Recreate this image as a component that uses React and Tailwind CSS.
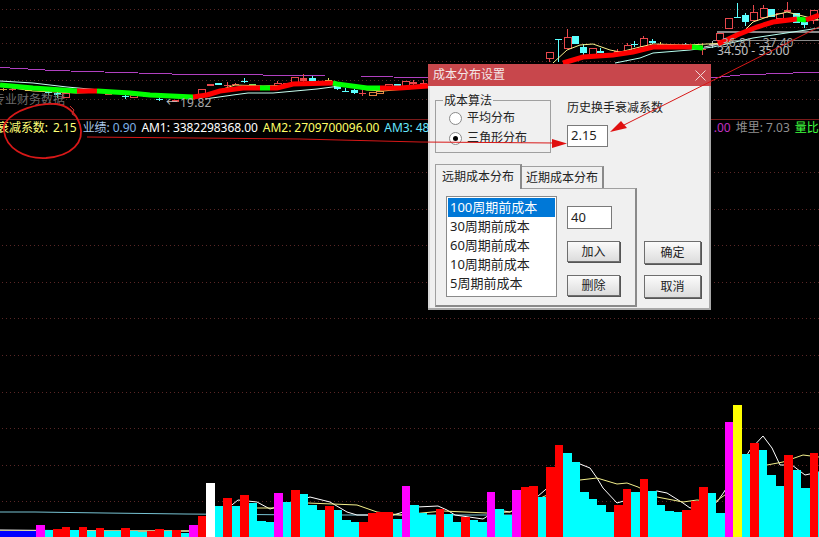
const DOT_ROWS = [9, 27, 43, 61, 80, 99, 172, 209, 245, 282, 318, 355, 392, 428, 465, 501];

const BAR_FILL = { m: '#ff00ff', c: '#00ffff', r: '#ff0000', w: '#ffffff', y: '#ffff00' };

// kind and top edge of each volume bar, left to right
const BARS = [
    ['m', 525], ['c', 530], ['r', 529], ['r', 527], ['c', 530], ['r', 527], ['c', 531], ['r', 528], ['c', 531], ['c', 531],
    ['r', 528], ['c', 531], ['c', 532], ['r', 531], ['r', 529], ['c', 531], ['r', 530], ['c', 533], ['m', 525], ['r', 516],
    ['w', 483], ['c', 506], ['r', 498], ['c', 506], ['r', 495], ['c', 503], ['c', 521], ['c', 522], ['m', 493], ['c', 502],
    ['r', 490], ['c', 494], ['c', 505], ['c', 510], ['r', 506], ['c', 510], ['c', 520], ['c', 522], ['r', 522], ['r', 513],
    ['r', 512], ['r', 512], ['c', 519], ['m', 486], ['c', 505], ['c', 513], ['c', 515], ['r', 509], ['c', 514], ['c', 522],
    ['r', 517], ['c', 520], ['c', 522], ['m', 492], ['c', 509], ['c', 515], ['m', 490], ['r', 487], ['r', 486], ['c', 497],
    ['r', 467], ['r', 445], ['c', 453], ['c', 462], ['c', 492], ['c', 499], ['c', 505], ['c', 512], ['r', 505], ['r', 489],
    ['c', 492], ['r', 479], ['c', 491], ['c', 505], ['c', 511], ['c', 512], ['r', 510], ['r', 501], ['r', 487], ['c', 493],
    ['c', 513], ['m', 422], ['y', 405], ['c', 454], ['r', 443], ['c', 450], ['c', 475], ['c', 486], ['r', 455], ['c', 470],
    ['c', 488], ['r', 453], ['c', 472],
];

// x, body top, body bottom, wick top, wick bottom, colour, hollow
const RED = '#e8484c';
const CYAN = '#5cffff';
const CANDLES = [
    [3, 89, 90, 88, 91, '#d0a040'], [12, 89, 90, 88, 91, RED], [28, 90, 91, 90, 91, '#e0c060'], [48, 92, 92, 89, 95, CYAN],
    [57, 93, 95, 92, 98, CYAN], [65, 93, 97, 93, 97, RED, true], [108, 93, 95, 93, 95, RED], [125, 96, 96, 94, 99, CYAN],
    [133, 95, 97, 95, 97, RED, true], [146, 96, 97, 96, 97, RED], [159, 99, 99, 97, 101, CYAN], [175, 100, 102, 100, 102, RED],
    [201, 89, 95, 89, 95, RED, true], [210, 84, 86, 84, 86, RED], [218, 83, 85, 83, 85, CYAN], [227, 85, 85, 82, 87, RED],
    [235, 84, 84, 83, 85, RED], [244, 81, 81, 78, 83, CYAN], [252, 84, 86, 84, 86, '#80e060'], [277, 83, 87, 81, 87, RED, true],
    [286, 83, 83, 83, 84, RED], [294, 77, 83, 77, 83, RED, true], [303, 78, 81, 74, 84, RED], [312, 78, 81, 76, 81, CYAN],
    [328, 80, 81, 78, 82, '#e0e060'], [337, 85, 89, 85, 90, CYAN], [345, 91, 91, 88, 92, CYAN], [354, 90, 93, 89, 94, CYAN],
    [362, 93, 93, 90, 96, RED], [372, 92, 95, 92, 95, '#e08040', true], [379, 91, 93, 91, 93, '#e08040', true],
    [388, 84, 87, 84, 87, RED, true], [397, 84, 87, 84, 87, CYAN], [405, 81, 86, 81, 86, RED, true], [413, 82, 84, 80, 85, RED],
    [423, 83, 84, 80, 85, RED],
    [549, 52, 58, 52, 62, RED, true], [558, 39, 39, 39, 62, CYAN], [567, 37, 48, 29, 48, RED, true], [575, 36, 44, 36, 44, CYAN],
    [583, 47, 53, 44, 56, CYAN], [592, 48, 54, 48, 54, RED, true], [600, 51, 53, 48, 53, CYAN], [617, 51, 53, 49, 55, RED],
    [627, 45, 51, 43, 51, RED, true], [634, 44, 44, 41, 47, CYAN], [643, 38, 46, 36, 46, RED, true], [652, 41, 43, 39, 44, CYAN],
    [660, 44, 45, 42, 46, '#e0e060'], [685, 44, 45, 43, 46, CYAN], [702, 49, 50, 43, 55, RED], [712, 44, 44, 41, 48, '#b0b0b0'],
    [719, 33, 40, 33, 40, RED, true], [728, 18, 28, 18, 28, RED, true], [737, 17, 17, 3, 18, CYAN], [745, 15, 22, 13, 26, CYAN],
    [753, 12, 20, 5, 20, RED, true], [763, 8, 17, 5, 17, RED, true], [771, 9, 17, 9, 17, CYAN], [779, 13, 18, 13, 18, RED, true],
    [787, 10, 12, 2, 12, RED], [796, 13, 23, 13, 23, CYAN], [804, 22, 25, 18, 28, CYAN], [813, 10, 20, 10, 24, RED, true],
];

const TREND = [
    ['#00ff00', '0,85 33,88 77,91'],
    ['#ff0000', '77,91 97,91'],
    ['#00ff00', '97,91 130,93 150,95 193,97'],
    ['#ff0000', '193,97 207,95 220,91 243,88 260,88'],
    ['#00ff00', '260,88 270,88'],
    ['#ff0000', '270,88 277,88 293,84 333,83'],
    ['#00ff00', '333,83 337,84 367,88 380,88'],
    ['#ff0000', '380,88 400,88 428,86'],
    ['#ff0000', '563,63 583,57 613,55 633,52 653,47 692,47'],
    ['#00ff00', '692,47 703,48'],
    ['#ff0000', '718,44 737,35 757,27 773,22 797,19'],
    ['#00ff00', '797,19 806,20'],
    ['#ff0000', '806,20 819,15'],
];

function PriceChart() {
    return (
        <svg className="absolute inset-0" width="819" height="537" viewBox="0 0 819 537">
            <g shapeRendering="crispEdges">
                {DOT_ROWS.map(y => (
                    <line key={y} x1="2" x2="819" y1={y + 0.5} y2={y + 0.5} stroke="#5a2626" strokeDasharray="1 3" />
                ))}
                <line x1="0" x2="819" y1="119.5" y2="119.5" stroke="#7a1a1a" />
                <polyline fill="none" stroke="#b040c0" points="0,67 10,68 28,69 45,70 70,71 104,72 138,73 172,74 200,74 325,76 360,76 393,77 430,78" />
                <polyline fill="none" stroke="#b040c0" points="711,78 740,75 819,72" />
                <rect x="717" y="31" width="102" height="2" fill="#8a8a8a" />
                <rect x="713" y="40" width="106" height="1" fill="#8a8a8a" />
            </g>
            {CANDLES.map(([x, top, bottom, wickTop, wickBottom, color, hollow]) => (
                <g key={x} shapeRendering="crispEdges">
                    <line x1={x + 0.5} x2={x + 0.5} y1={wickTop} y2={wickBottom} stroke={color} />
                    <rect x={x - 3} y={top} width="7" height={Math.max(bottom - top, 1)} fill={hollow ? '#000' : color} stroke={hollow ? color : 'none'} />
                </g>
            ))}
            <polyline fill="none" stroke="#c8fff0" points="0,81 33,83 67,87 100,90 133,93 167,95 193,97" />
            <polyline fill="none" stroke="#f0e060" points="0,86 33,91 77,93 100,92 193,99 220,90 235,85 263,86 300,85 333,82 367,90 383,91 428,87" />
            <polyline fill="none" stroke="#c8fff0" points="205,99 233,95 248,93 273,93 317,89 340,86" />
            <polyline fill="none" stroke="#f6f08c" points="553,63 567,50 580,45 593,44 610,50 620,52 640,47 653,44 687,45 727,43 740,35 753,22 767,17 787,12 807,17 819,20" />
            <polyline fill="none" stroke="#b8fff0" points="615,63 640,58 653,53 690,50 713,47 753,38 793,32 819,28" />
            <line x1="704" x2="720" y1="47" y2="44" stroke="#e0d0d0" />
            {TREND.map(([color, points]) => (
                <polyline key={points} fill="none" stroke={color} strokeWidth="5" points={points} />
            ))}
            <text x="-7" y="104" fontSize="12" fill="#6a6a6a">专业财务数据</text>
            <text x="166" y="107" fontSize="12" fill="#c0c0c0">←</text>
            <text x="180" y="107" fontSize="12" letterSpacing="0.2" fill="#a8a8a8">19.82</text>
            <text x="722" y="47" fontSize="12" fill="#a8a8a8">36.81 - 37.40</text>
            <text x="717" y="55" fontSize="12.2" fill="#c0c0c0">34.50 - 35.00</text>
        </svg>
    );
}

function VolumeChart() {
    return (
        <svg className="absolute inset-0" width="819" height="537" viewBox="0 0 819 537">
            <polyline fill="none" stroke="#78c4d4" points="0,512 35,512 105,513 185,514 312,515 600,515" />
            <polyline fill="none" stroke="#ffffff" points="0,530 108,531 200,531 238,500 257,502 270,509 310,497 330,502 347,512 357,515 393,515 400,513 417,507 438,506 447,510 455,515 483,519 497,510 510,512 537,497 545,490 580,464 590,468 597,478 603,488 617,503 657,491 667,493 683,503 690,508 717,502 724,492 750,450 763,436 772,448 780,465 792,465 805,475 819,472" />
            <polyline fill="none" stroke="#f4f08c" points="0,531 200,531 257,508 273,508 308,503 357,505 377,512 400,515 443,511 487,513 510,512 580,480 597,478 617,484 627,483 638,487 657,497 683,502 697,500 715,502 767,465 783,462 803,455 819,457" />
            <g shapeRendering="crispEdges">
                <rect x="0" y="531" width="36" height="6" fill="#0000ff" />
                {BARS.map(([kind, top], i) => {
                    const x = Math.round(36 + 8.5 * i);
                    return <rect key={i} x={x} y={top} width={Math.round(36 + 8.5 * (i + 1)) - x} height={537 - top} fill={BAR_FILL[kind]} />;
                })}
            </g>
        </svg>
    );
}

function IndicatorRow() {
    return (
        <div className="absolute inset-x-0 top-[120px] flex h-4 items-center justify-between whitespace-nowrap text-xs leading-4">
            <div className="-ml-[3px] flex shrink-0 gap-[5px] tracking-[-0.05px]">
                <span className="text-[#ffff78]">衰减系数: <span className="ml-[2px]">2.15</span></span>
                <span className="ml-px text-[#7fb2e8]"><span className="text-[#a8c8e8]">业绩:</span> 0.90</span>
                <span className="text-white">AM1: 3382298368.00</span>
                <span className="text-[#ffff66]">AM2: 2709700096.00</span>
                <span className="text-[#66e6ff]">AM3: 481</span>
            </div>
            <div className="-mr-[3px] flex shrink-0 gap-[5px]">
                <span className="text-[#c030c0]">.00</span>
                <span className="text-[#909090]">堆里: 7.03</span>
                <span className="text-[#40ff40]">量比:</span>
            </div>
        </div>
    );
}

function Radio({ checked, label, className }) {
    return (
        <div className={`flex h-4 items-center gap-[5px] ${className}`}>
            <span className="flex size-[13px] items-center justify-center rounded-full border border-[#8a8a8a] bg-white">
                {checked && <span className="size-[5px] rounded-full bg-black" />}
            </span>
            <span>{label}</span>
        </div>
    );
}

function Field({ value, className }) {
    return (
        <div className={`flex items-center border border-[#7a7a7a] bg-white pl-[3px] text-[13px] ${className}`}>
            {value}
        </div>
    );
}

function Button({ label, className }) {
    return (
        <div className={`flex items-center justify-center border border-[#6e6e6e] bg-gradient-to-b from-[#fbfbfb] to-[#dcdcdc] shadow-[1px_1px_0_#555] ${className}`}>
            {label}
        </div>
    );
}

const PERIODS = ['100周期前成本', '30周期前成本', '60周期前成本', '10周期前成本', '5周期前成本'];

function SettingsDialog() {
    return (
        <div className="absolute left-[428px] top-[64px] flex h-[246px] w-[283px] flex-col bg-[#f0f0f0] text-xs text-[#222] shadow-[inset_-2px_-2px_0_#a8a8a8,inset_2px_0_0_#d8d8d8]">
            <div className="flex h-[22px] items-center justify-between bg-[#c8474c] pl-[5px] pr-[5px] text-[#f4e8e8]">
                <span>成本分布设置</span>
                <svg width="11" height="11" viewBox="0 0 11 11" stroke="#f0d8d8" fill="none">
                    <path d="M0.5 0.5 10.5 10.5M10.5 0.5 0.5 10.5" />
                </svg>
            </div>

            <div className="flex pl-[7px] pt-[14px]">
                <div className="relative h-[53px] w-[116px] border border-[#a0a0a0] pl-[13px] pt-[9px]">
                    <span className="absolute -top-[8px] left-[7px] bg-[#f0f0f0] px-px leading-4">成本算法</span>
                    <Radio label="平均分布" />
                    <Radio checked label="三角形分布" className="mt-1" />
                </div>
                <div className="ml-[16px] flex flex-col">
                    <span className="leading-4">历史换手衰减系数</span>
                    <Field value="2.15" className="mt-[9px] h-[22px] w-[41px]" />
                </div>
            </div>

            <div className="flex pl-[7px] pt-[11px]">
                <div className="flex w-[202px] flex-col">
                    <div className="flex items-end">
                        <div className="z-10 -mb-px flex h-[25px] w-[87px] items-center justify-center border-r-2 border-t border-l border-[#a0a0a0] border-r-[#8a8a8a] bg-[#f0f0f0]">远期成本分布</div>
                        <div className="flex h-[22px] w-[82px] items-center justify-center border-r-2 border-t border-[#a0a0a0] border-r-[#8a8a8a] bg-[#f0f0f0]">近期成本分布</div>
                    </div>
                    <div className="flex h-[119px] border-b-2 border-l border-r-2 border-t border-[#a0a0a0] border-b-[#8a8a8a] border-r-[#8a8a8a] pl-[10px] pt-[7px]">
                        <div className="h-[101px] w-[111px] border border-[#8a8a8a] bg-white p-px text-[13px]">
                            {PERIODS.map((period, i) => (
                                <div key={period} className={`flex h-[19px] items-center pl-[2px] ${i === 0 ? 'bg-[#0078d7] text-white' : ''}`}>{period}</div>
                            ))}
                        </div>
                        <div className="ml-[10px] flex flex-col pt-[10px]">
                            <Field value="40" className="h-[23px] w-[45px]" />
                            <Button label="加入" className="mt-3 h-[21px] w-[53px]" />
                            <Button label="删除" className="mt-[13px] h-[21px] w-[53px]" />
                        </div>
                    </div>
                </div>
                <div className="ml-[7px] flex flex-col pt-[77px]">
                    <Button label="确定" className="h-[23px] w-[57px]" />
                    <Button label="取消" className="mt-[11px] h-[23px] w-[57px]" />
                </div>
            </div>
        </div>
    );
}

function Annotations() {
    return (
        <svg className="pointer-events-none absolute inset-0" width="819" height="537" viewBox="0 0 819 537" fill="none">
            <path d="M6 122C14 110 38 103 56 104 66 105 76 112 80 125 85 142 72 156 46 158 24 159 6 148 4 131 3 126 4 124 6 122" stroke="#d81818" strokeWidth="1.8" />
            <path d="M70 106 74 110 72 114 75 116" stroke="#c83030" />
            <path d="M87 137 300 139 420 142 556 143" stroke="#d81818" />
            <path d="M552 139 567 143.5 552 148Z" fill="#e01010" />
            <path d="M819 27 620 127" stroke="#d81818" />
            <path d="M610 132 621 121 627 128Z" fill="#e01010" />
        </svg>
    );
}

export default function App() {
    return (
        <div className="relative h-[537px] w-[819px] overflow-hidden bg-black font-['Noto_Sans','Noto_Sans_CJK_SC',sans-serif]">
            <PriceChart />
            <VolumeChart />
            <IndicatorRow />
            <SettingsDialog />
            <Annotations />
        </div>
    );
}
